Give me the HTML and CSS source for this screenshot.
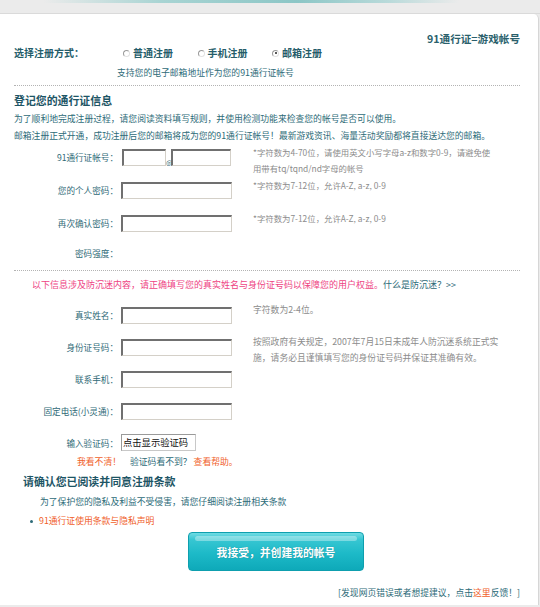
FILE: index.html
```html
<!DOCTYPE html>
<html lang="zh-CN">
<head>
<meta charset="utf-8">
<title>91通行证注册</title>
<link rel="stylesheet" href="styles.css">
</head>
<body>
<div class="topband"><div class="topline"></div></div>
<div class="card">
  <div class="slogan">91通行证=游戏帐号</div>
  <div class="mode-row">
    <span class="mode-label">选择注册方式：</span>
    <span class="radio"><span class="rdot"></span>普通注册</span>
    <span class="radio"><span class="rdot"></span>手机注册</span>
    <span class="radio"><span class="rdot on"></span>邮箱注册</span>
  </div>
  <div class="mode-tip">支持您的电子邮箱地址作为您的91通行证帐号</div>
  <div class="dots"></div>

  <h2 class="sec-title">登记您的通行证信息</h2>
  <p class="intro first">为了顺利地完成注册过程，请您阅读资料填写规则，并使用检测功能来检查您的帐号是否可以使用。</p>
  <p class="intro">邮箱注册正式开通，成功注册后您的邮箱将成为您的91通行证帐号！最新游戏资讯、海量活动奖励都将直接送达您的邮箱。</p>

  <div class="form">
    <div class="row">
      <label class="lbl">91通行证帐号：</label>
      <div class="field"><input class="txt short" type="text"><span class="at">@</span><input class="txt mid" type="text"></div>
      <div class="hint">*字符数为4-70位，请使用英文小写字母a-z和数字0-9，请避免使<br>用带有tq/tqnd/nd字母的帐号</div>
    </div>
    <div class="row">
      <label class="lbl">您的个人密码：</label>
      <div class="field"><input class="txt" type="password"></div>
      <div class="hint">*字符数为7-12位，允许A-Z, a-z, 0-9</div>
    </div>
    <div class="row">
      <label class="lbl">再次确认密码：</label>
      <div class="field"><input class="txt" type="password"></div>
      <div class="hint">*字符数为7-12位，允许A-Z, a-z, 0-9</div>
    </div>
    <div class="row strength">
      <label class="lbl">密码强度：</label>
    </div>
  </div>
  <div class="dots dots2"></div>

  <div class="warn">以下信息涉及防沉迷内容，请正确填写您的真实姓名与身份证号码以保障您的用户权益。<span class="what">什么是防沉迷？&gt;&gt;</span></div>

  <div class="form form-b">
    <div class="row rb">
      <label class="lbl">真实姓名：</label>
      <div class="field"><input class="txt" type="text"></div>
      <div class="hint">字符数为2-4位。</div>
    </div>
    <div class="row rb">
      <label class="lbl">身份证号码：</label>
      <div class="field"><input class="txt" type="text"></div>
      <div class="hint">按照政府有关规定，2007年7月15日未成年人防沉迷系统正式实<br>施，请务必且谨慎填写您的身份证号码并保证其准确有效。</div>
    </div>
    <div class="row rb">
      <label class="lbl">联系手机：</label>
      <div class="field"><input class="txt" type="text"></div>
    </div>
    <div class="row rb">
      <label class="lbl">固定电话(小灵通)：</label>
      <div class="field"><input class="txt" type="text"></div>
    </div>
    <div class="row captcha">
      <label class="lbl">输入验证码：</label>
      <div class="field"><span class="cbox">点击显示验证码</span></div>
    </div>
  </div>
  <div class="help"><span class="red">我看不清！</span><span class="mid-t">验证码看不到？</span><span class="red">查看帮助。</span></div>

  <h2 class="terms-title">请确认您已阅读并同意注册条款</h2>
  <div class="terms-tip">为了保护您的隐私及利益不受侵害，请您仔细阅读注册相关条款</div>
  <div class="bullet"><span class="bdot"></span><span class="red">91通行证使用条款与隐私声明</span></div>

  <button class="submit" type="button">我接受，并创建我的帐号</button>

  <div class="footer">[发现网页错误或者想提建议，点击<span class="red">这里</span>反馈！]</div>
</div>
</body>
</html>
```

FILE: styles.css
```css
html, body {
  margin: 0;
  padding: 0;
}
body {
  background: #ebebeb;
  font-family: "Noto Sans CJK SC", "DejaVu Sans", sans-serif;
  font-size: 8.8px;
  color: #2d6b78;
}
.topband {
  height: 13px;
  background: #ebebeb;
  border-bottom: 1px solid #dadada;
}
.topline {
  height: 3px;
  background: linear-gradient(90deg, rgba(170,210,210,0) 8%, #a8d4d3 30%, #8cc6c6 55%, #b9dada 72%, rgba(200,225,225,0) 85%);
}
.card {
  width: 539px;
  box-sizing: border-box;
  background: #fff;
  border-right: 1px solid #d6d6d6;
  border-top-right-radius: 5px;
  padding: 18px 18px 5px 14px;
}
.slogan {
  text-align: right;
  font-size: 10.6px;
  font-weight: bold;
  line-height: 14px;
  color: #2a5f6c;
}
.mode-row {
  display: flex;
  align-items: center;
  height: 14px;
  line-height: 14px;
  font-size: 10px;
  font-weight: bold;
  color: #245c69;
}
.mode-label {
  width: 109px;
}
.radio {
  display: flex;
  align-items: center;
  margin-right: 24.5px;
}
.rdot {
  width: 7px;
  height: 7px;
  box-sizing: border-box;
  border-radius: 50%;
  border: 1px solid #9a9a9a;
  border-right-color: #e2e2e2;
  border-bottom-color: #e2e2e2;
  margin-right: 3px;
  display: flex;
  align-items: center;
  justify-content: center;
}
.rdot.on::after {
  content: "";
  width: 2px;
  height: 2px;
  border-radius: 50%;
  background: #222;
}
.mode-tip {
  margin-top: 7px;
  padding-left: 103px;
  line-height: 12px;
}
.dots {
  margin-top: 6px;
  height: 0;
  border-top: 1px dotted #b3b3b3;
}
.dots2 {
  margin-top: 7px;
}
.sec-title,
.terms-title {
  margin: 7px 0 0;
  font-size: 10.9px;
  line-height: 14px;
  font-weight: bold;
  color: #1d5565;
}
.intro {
  margin: 0;
  line-height: 17px;
  font-size: 8.8px;
}
.intro.first {
  margin-top: 3px;
}
.row {
  display: grid;
  grid-template-columns: 104px 129px 1fr;
  column-gap: 3px;
  align-items: start;
  height: 33px;
}
.lbl {
  text-align: right;
  margin-top: 5px;
  line-height: 17px;
  font-size: 8.6px;
  color: #2f6a77;
  white-space: nowrap;
}
.field {
  margin-top: 5px;
  display: flex;
  align-items: flex-end;
}
.txt {
  display: block;
  width: 111px;
  height: 17px;
  box-sizing: border-box;
  margin: 0;
  padding: 0;
  background: #fff;
  border-top: 2px solid #707070;
  border-left: 2px solid #707070;
  border-right: 1px solid #d4d0c8;
  border-bottom: 1px solid #d4d0c8;
  outline: none;
}
.txt.short {
  width: 44px;
  margin-left: 1px;
}
.txt.mid {
  width: 60px;
}
.at {
  width: 5px;
  font-size: 6.5px;
  line-height: 8px;
  text-align: center;
  color: #2f6a77;
}
.hint {
  color: #8c8c8c;
  font-size: 8.4px;
  line-height: 16px;
  white-space: nowrap;
}
.row.strength {
  height: 20px;
}
.row.strength .lbl {
  margin-top: 1.5px;
}
.warn {
  margin-top: 7px;
  padding-left: 18px;
  line-height: 14px;
  font-size: 9px;
  color: #ee4383;
}
.warn .what {
  color: #2d6b78;
}
.form-b {
  margin-top: 10px;
}
.row.rb {
  height: 32px;
}
.form-b .hint {
  font-size: 8.8px;
}
.row.captcha {
  height: 25px;
}
.row.captcha .field {
  margin-top: 4px;
}
.cbox {
  display: block;
  width: 75px;
  height: 17px;
  box-sizing: border-box;
  border: 1px solid #c8c8c8;
  border-top-color: #9a9a9a;
  border-left-color: #9a9a9a;
  background: #fff;
  color: #111;
  font-size: 9.3px;
  line-height: 15px;
  padding-left: 1px;
  white-space: nowrap;
}
.help {
  padding-left: 63px;
  line-height: 14px;
}
.red {
  color: #f0602a;
}
.help .mid-t {
  margin: 0 2px 0 9px;
}
.terms-title {
  margin-top: 5px;
  padding-left: 9px;
}
.terms-tip {
  margin-top: 7px;
  padding-left: 26px;
  line-height: 14px;
}
.bullet {
  margin-top: 5px;
  padding-left: 16px;
  display: flex;
  align-items: center;
  line-height: 14px;
}
.bdot {
  width: 3px;
  height: 3px;
  border-radius: 50%;
  background: #2d6b78;
  margin-right: 6px;
}
.submit {
  position: relative;
  display: block;
  margin: 4px 0 0 174px;
  width: 176px;
  height: 39px;
  padding: 0;
  border: 1px solid #0e9fae;
  border-radius: 4px;
  background: linear-gradient(#6fdbe3 0%, #37c6d2 18%, #1dbac8 55%, #0ea9b9 100%);
  color: #fff;
  font-family: "Noto Sans CJK SC", "DejaVu Sans", sans-serif;
  font-size: 10.8px;
  font-weight: bold;
  text-shadow: 0 0 1px rgba(0,80,90,0.5);
  cursor: pointer;
}
.submit::before {
  content: "";
  position: absolute;
  top: 3px;
  left: 6px;
  right: 6px;
  height: 5px;
  border-radius: 3px;
  background: rgba(255,255,255,0.35);
}
.footer {
  margin-top: 15px;
  text-align: right;
  line-height: 14px;
  color: #2d6b78;
}
```
